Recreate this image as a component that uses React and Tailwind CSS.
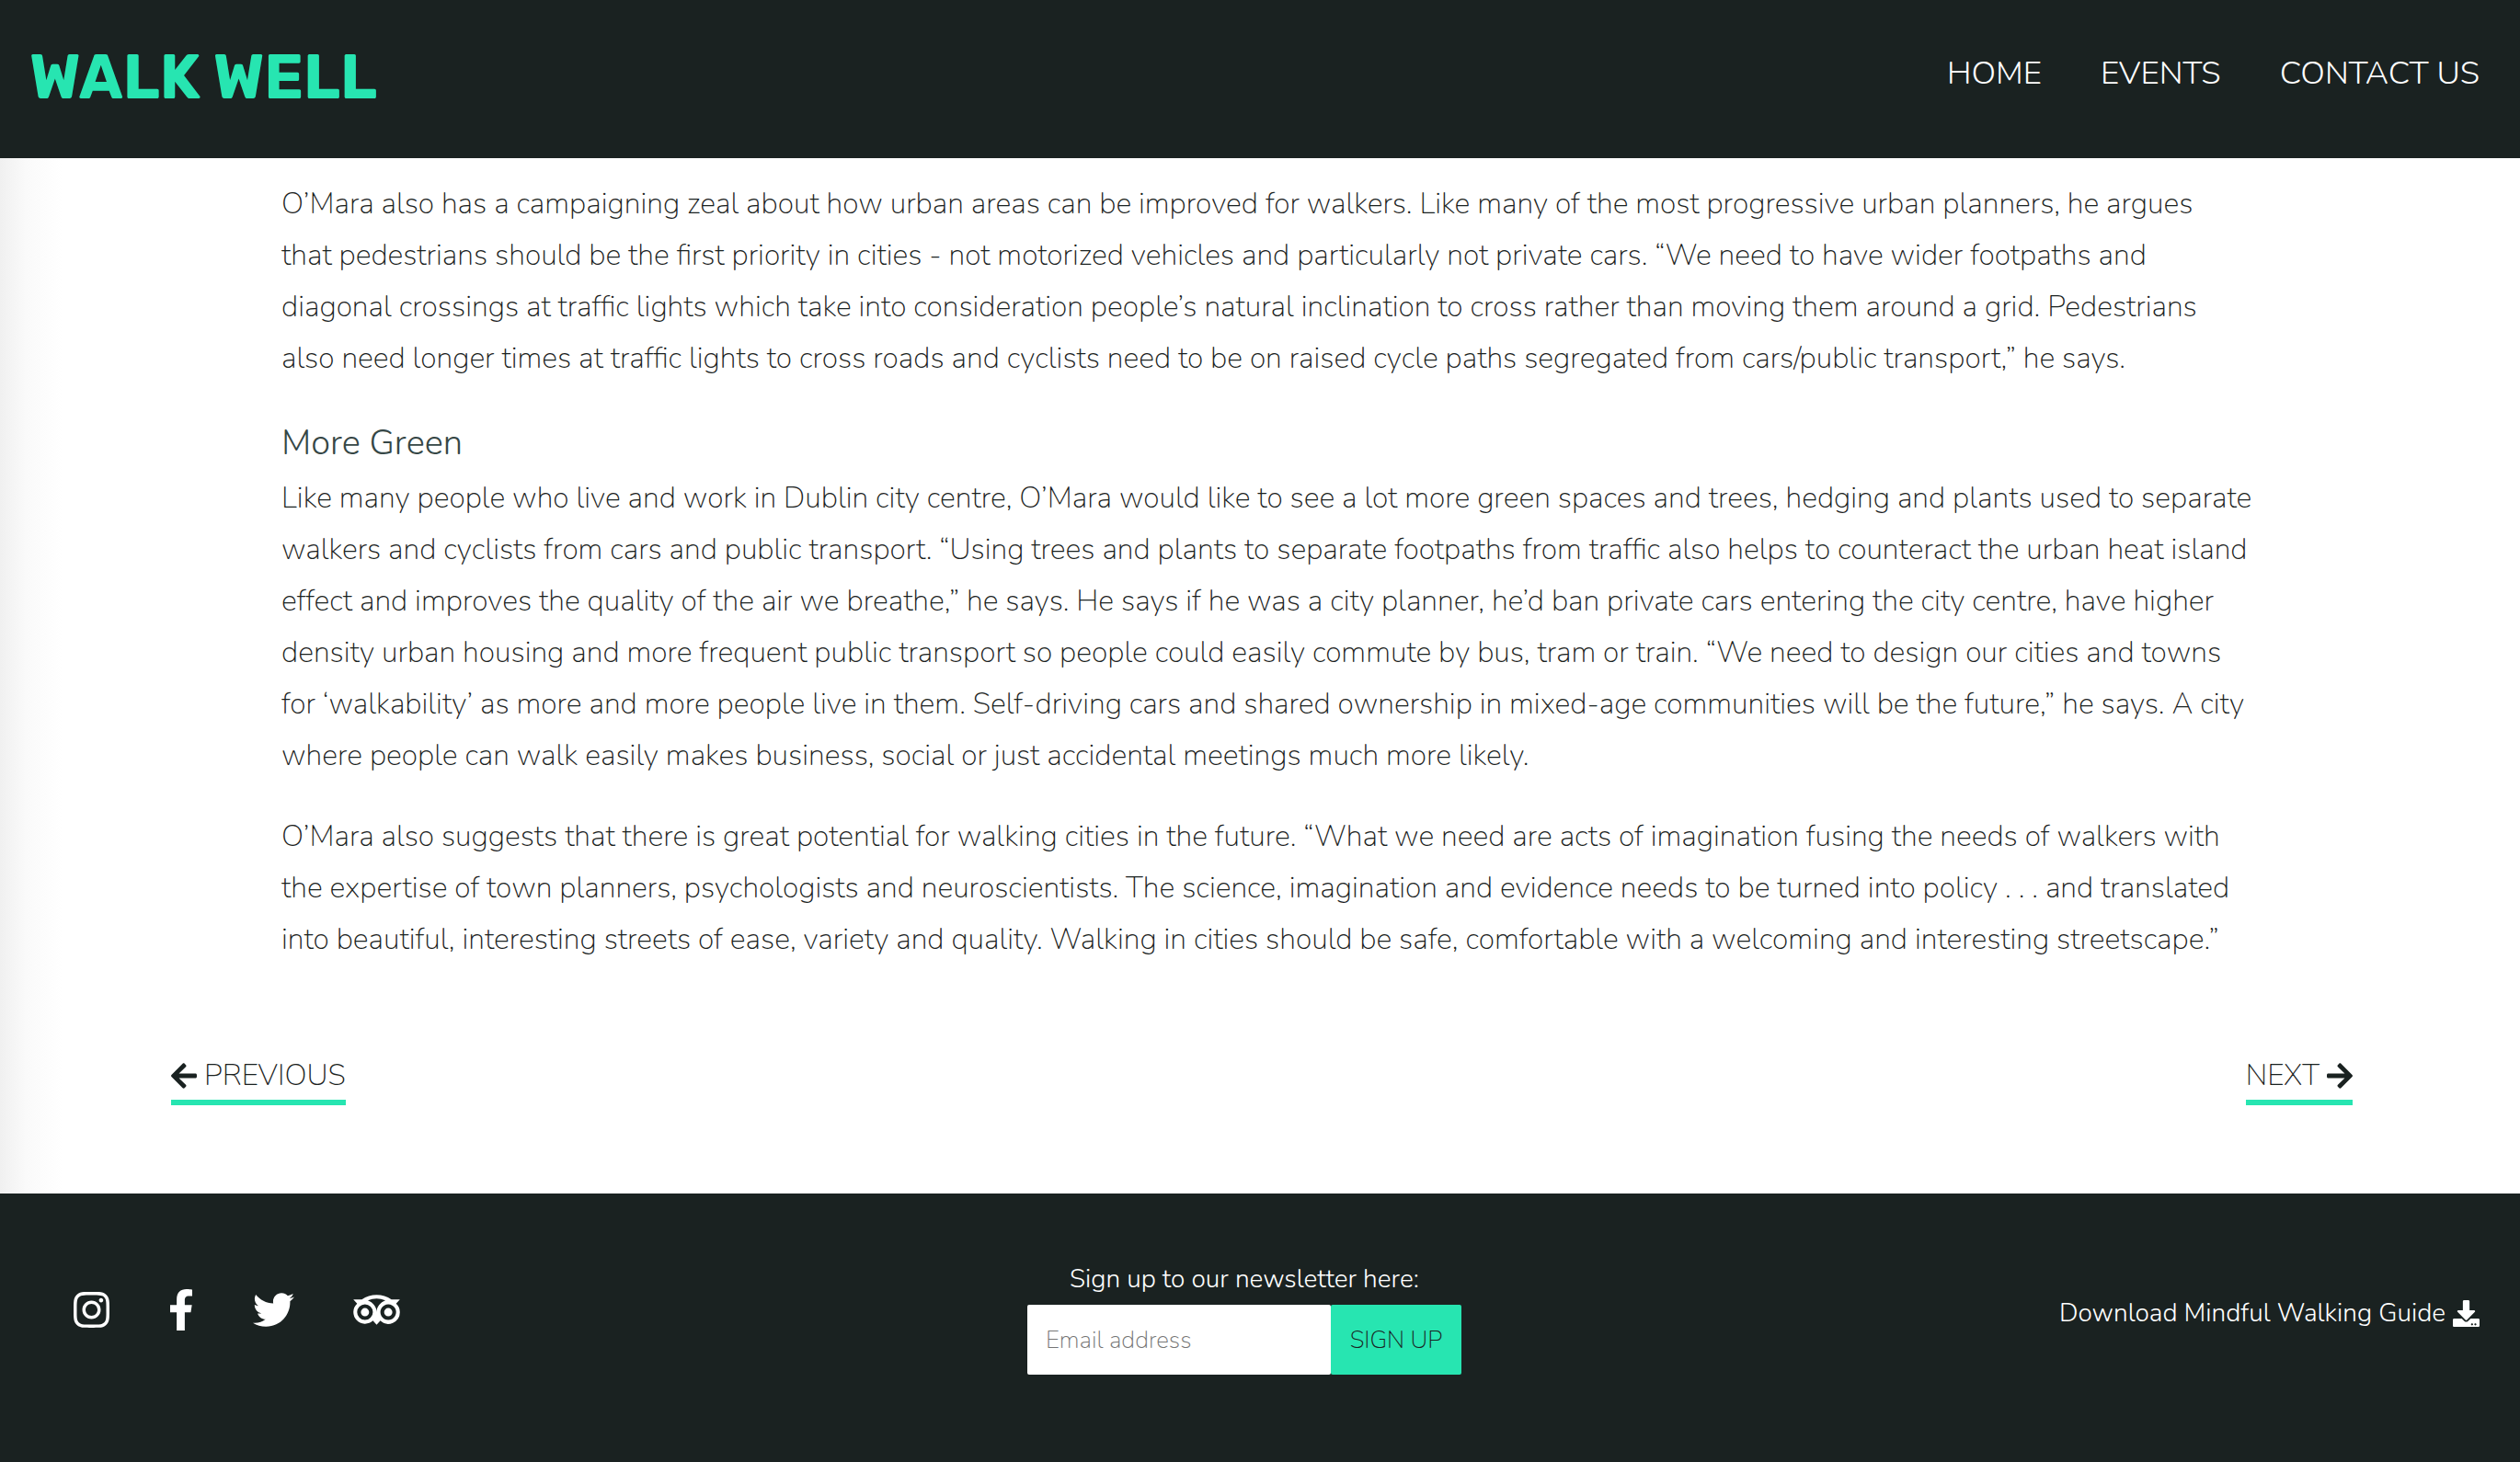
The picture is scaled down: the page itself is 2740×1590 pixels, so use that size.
import {
  FaArrowLeft,
  FaArrowRight,
  FaDownload,
  FaFacebookF,
  FaInstagram,
  FaTripadvisor,
  FaTwitter,
} from "react-icons/fa";

const navLinks = ["Home", "Events", "Contact Us"];

const socialLinks = [
  { label: "Instagram", Icon: FaInstagram, width: "w-[39px]" },
  { label: "Facebook", Icon: FaFacebookF, width: "w-[28px]" },
  { label: "Twitter", Icon: FaTwitter, width: "w-[45px]" },
  { label: "TripAdvisor", Icon: FaTripadvisor, width: "w-[51px]" },
];

const urbanAreas = [
  "O’Mara also has a campaigning zeal about how urban areas can be improved for walkers. Like many of the most progressive urban planners, he argues",
  "that pedestrians should be the first priority in cities - not motorized vehicles and particularly not private cars. “We need to have wider footpaths and",
  "diagonal crossings at traffic lights which take into consideration people’s natural inclination to cross rather than moving them around a grid. Pedestrians",
  "also need longer times at traffic lights to cross roads and cyclists need to be on raised cycle paths segregated from cars/public transport,” he says.",
];

const moreGreen = [
  "Like many people who live and work in Dublin city centre, O’Mara would like to see a lot more green spaces and trees, hedging and plants used to separate",
  "walkers and cyclists from cars and public transport. “Using trees and plants to separate footpaths from traffic also helps to counteract the urban heat island",
  "effect and improves the quality of the air we breathe,” he says. He says if he was a city planner, he’d ban private cars entering the city centre, have higher",
  "density urban housing and more frequent public transport so people could easily commute by bus, tram or train. “We need to design our cities and towns",
  "for ‘walkability’ as more and more people live in them. Self-driving cars and shared ownership in mixed-age communities will be the future,” he says. A city",
  "where people can walk easily makes business, social or just accidental meetings much more likely.",
];

const walkingCities = [
  "O’Mara also suggests that there is great potential for walking cities in the future. “What we need are acts of imagination fusing the needs of walkers with",
  "the expertise of town planners, psychologists and neuroscientists. The science, imagination and evidence needs to be turned into policy . . . and translated",
  "into beautiful, interesting streets of ease, variety and quality. Walking in cities should be safe, comfortable with a welcoming and interesting streetscape.”",
];

function Paragraph({ lines }) {
  return (
    <p className="mb-8 text-[32px] leading-14">
      {lines.map((line) => (
        <span key={line} className="block">
          {line}
        </span>
      ))}
    </p>
  );
}

function Header() {
  return (
    <header className="flex items-start justify-between bg-[#1a2221] pt-5 pr-11 pb-6 pl-8">
      <a
        href="#home"
        className="font-['Rubik','Open_Sans',sans-serif] text-[67px] leading-32 font-bold text-[#27e5b1] uppercase"
      >
        Walk Well
      </a>
      <nav>
        <ul className="flex gap-16 text-[35px] leading-30 font-light text-white uppercase">
          {navLinks.map((name) => (
            <li key={name}>
              <a href="#nav">{name}</a>
            </li>
          ))}
        </ul>
      </nav>
    </header>
  );
}

function PageLink({ children }) {
  return (
    <a
      href="#page"
      className="flex items-center gap-2 border-b-6 border-[#27e5b1] pb-0.5 text-[32px] leading-12 uppercase"
    >
      {children}
    </a>
  );
}

function Footer() {
  return (
    <footer className="flex grow items-start justify-between bg-[#1a2221] pt-[69px] pr-11 pb-24 pl-20 text-white">
      <ul className="flex h-[114px] items-center gap-16 pr-8">
        {socialLinks.map(({ label, Icon, width }) => (
          <li key={label}>
            <a href="#social" aria-label={label}>
              <Icon className={`h-[45px] ${width}`} />
            </a>
          </li>
        ))}
      </ul>
      <form className="flex flex-col items-center gap-1" onSubmit={(e) => e.preventDefault()}>
        <label htmlFor="email" className="text-[28px] leading-12 font-light">
          Sign up to our newsletter here:
        </label>
        <div className="flex h-[76px]">
          <input
            id="email"
            type="email"
            placeholder="Email address"
            className="w-[330px] rounded-xs bg-white px-5 text-[26px] text-[#1a2221] placeholder:text-[#757575]"
          />
          <button
            type="submit"
            className="w-[142px] rounded-xs bg-[#27e5b1] text-[26px] text-[#1a2221] uppercase"
          >
            Sign up
          </button>
        </div>
      </form>
      <a href="#guide" className="flex h-[122px] items-center gap-2 text-[28px] font-light">
        Download Mindful Walking Guide
        <FaDownload className="size-[29px]" />
      </a>
    </footer>
  );
}

export default function App() {
  return (
    <div className="flex min-h-screen flex-col bg-white font-['Nunito','Lato',sans-serif] font-extralight text-[#1a2221]">
      <Header />
      <main className="bg-linear-to-r from-[#f0f0f0] via-[#fafafa] via-[28px] to-white to-[68px] pr-[182px] pb-24 pl-[186px]">
        <article className="px-[120px] pt-[22px] pb-16 whitespace-nowrap">
          <Paragraph lines={urbanAreas} />
          <h2 className="text-[38px] leading-16 font-light text-[#364746]">More Green</h2>
          <Paragraph lines={moreGreen} />
          <Paragraph lines={walkingCities} />
        </article>
        <div className="flex justify-between">
          <PageLink>
            <FaArrowLeft className="h-8 w-7" />
            Previous
          </PageLink>
          <PageLink>
            Next
            <FaArrowRight className="h-8 w-7" />
          </PageLink>
        </div>
      </main>
      <Footer />
    </div>
  );
}
